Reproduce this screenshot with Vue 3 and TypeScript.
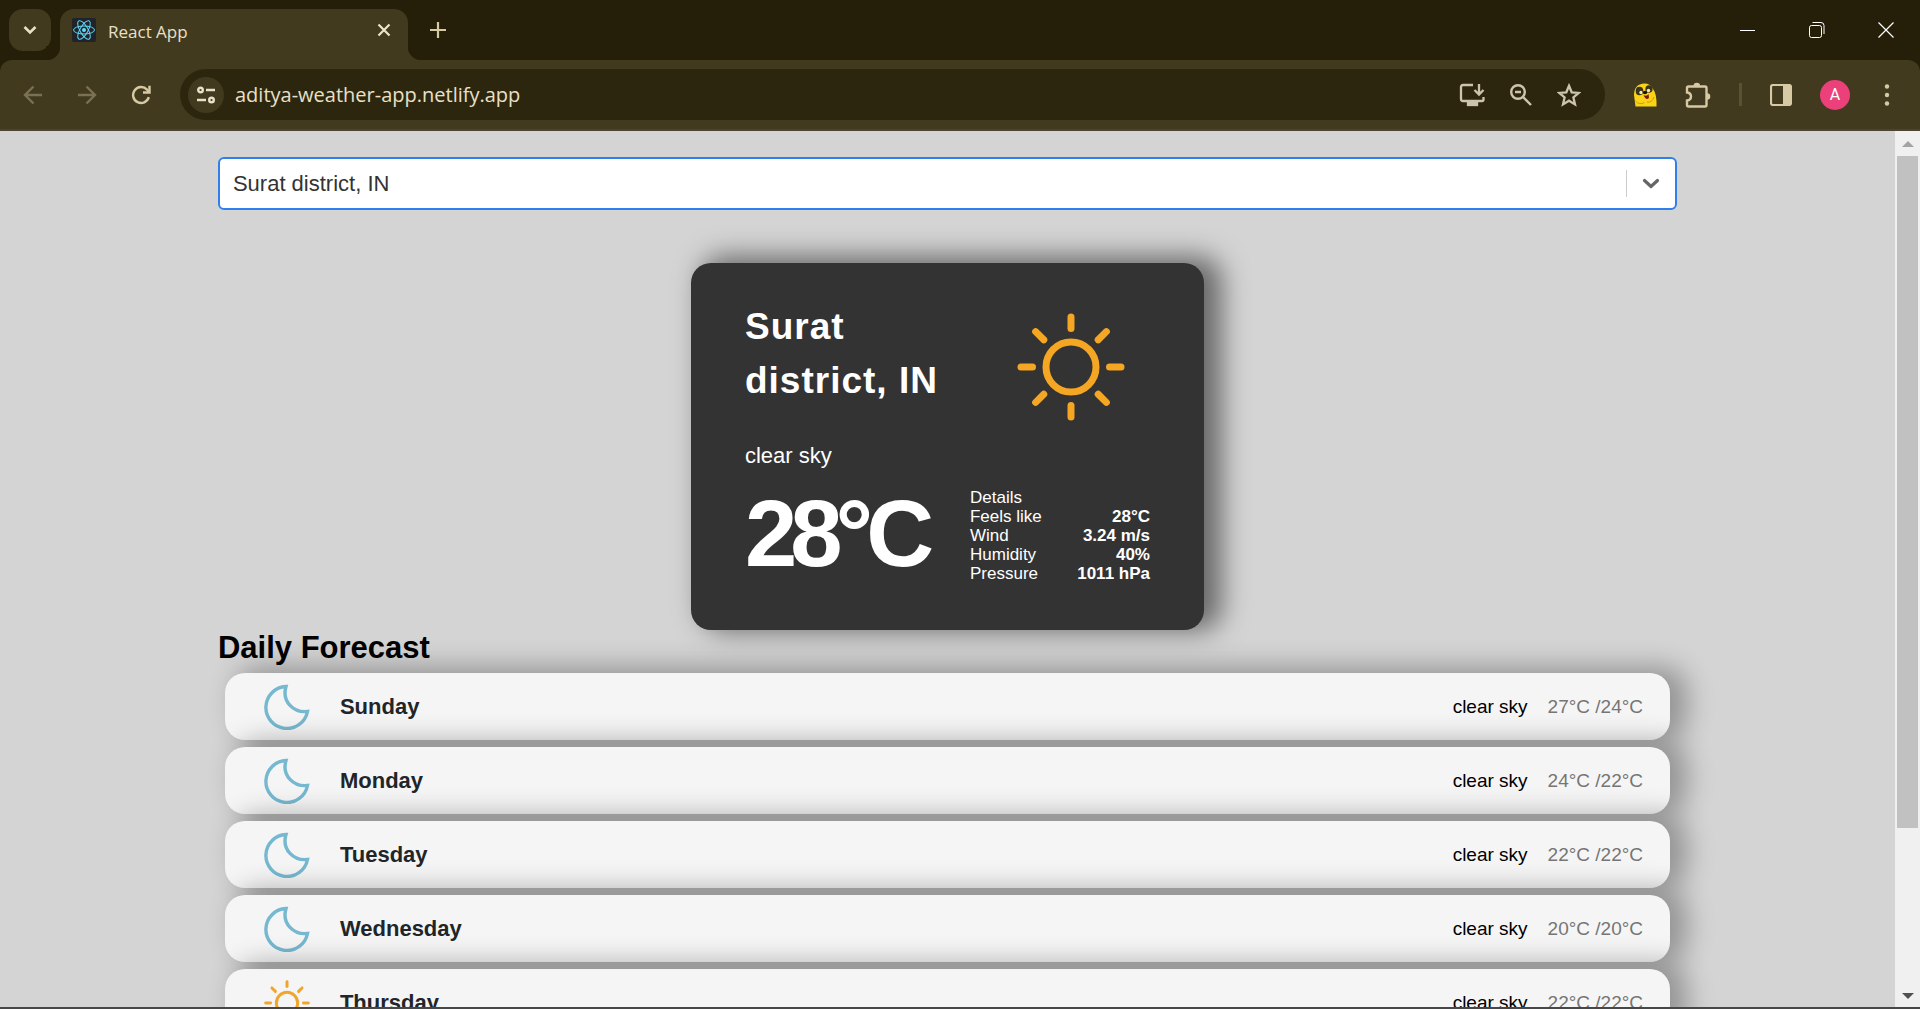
<script setup lang="ts">
import { ref } from 'vue'

interface ForecastDay {
  name: string
  icon: 'moon' | 'sun'
  description: string
  range: string
}

interface Detail {
  label: string
  value: string
}

const url = ref('aditya-weather-app.netlify.app')
const city = ref('Surat district, IN')

const details: Detail[] = [
  { label: 'Feels like', value: '28°C' },
  { label: 'Wind', value: '3.24 m/s' },
  { label: 'Humidity', value: '40%' },
  { label: 'Pressure', value: '1011 hPa' },
]

const days: ForecastDay[] = [
  { name: 'Sunday', icon: 'moon', description: 'clear sky', range: '27°C /24°C' },
  { name: 'Monday', icon: 'moon', description: 'clear sky', range: '24°C /22°C' },
  { name: 'Tuesday', icon: 'moon', description: 'clear sky', range: '22°C /22°C' },
  { name: 'Wednesday', icon: 'moon', description: 'clear sky', range: '20°C /20°C' },
  { name: 'Thursday', icon: 'sun', description: 'clear sky', range: '22°C /22°C' },
]

const rays = [0, 45, 90, 135, 180, 225, 270, 315]
</script>

<template>
  <div class="browser">
    <header class="tabstrip">
      <button class="tab-search" aria-label="Search tabs">
        <svg width="14" height="14" viewBox="0 0 14 14"><path d="M1.5 4l5.5 5.5L12.5 4" fill="none" stroke="#e8e0c8" stroke-width="2.6" /></svg>
      </button>
      <div class="tab">
        <svg class="favicon" width="24" height="24" viewBox="0 0 24 24">
          <rect width="24" height="24" rx="2" fill="#20232a" />
          <g fill="none" stroke="#61dafb" stroke-width="1">
            <ellipse cx="12" cy="12" rx="10.5" ry="4" />
            <ellipse cx="12" cy="12" rx="10.5" ry="4" transform="rotate(60 12 12)" />
            <ellipse cx="12" cy="12" rx="10.5" ry="4" transform="rotate(120 12 12)" />
          </g>
          <circle cx="12" cy="12" r="2" fill="#61dafb" />
        </svg>
        <span class="tab-title">React App</span>
        <button class="icon-btn tab-close" aria-label="Close tab">
          <svg width="14" height="14" viewBox="0 0 14 14"><path d="M1.5 1.5l11 11M12.5 1.5l-11 11" stroke="#ece4cc" stroke-width="2.2" /></svg>
        </button>
      </div>
      <button class="icon-btn new-tab" aria-label="New tab">
        <svg width="16" height="16" viewBox="0 0 16 16"><path d="M8 0v16M0 8h16" stroke="#d6c9a3" stroke-width="2.2" /></svg>
      </button>
      <div class="window-controls">
        <button class="icon-btn" aria-label="Minimize">
          <svg width="16" height="16" viewBox="0 0 16 16"><path d="M0 8.500h15" stroke="#fff" /></svg>
        </button>
        <button class="icon-btn" aria-label="Restore">
          <svg width="16" height="16" viewBox="0 0 16 16" fill="none" stroke="#fff"><rect x=".5" y="3.5" width="12" height="12" rx="2" /><path d="M3.5 .5H12a3 3 0 0 1 3 3V12" /></svg>
        </button>
        <button class="icon-btn" aria-label="Close">
          <svg width="16" height="16" viewBox="0 0 16 16"><path d="M.5 .5l15 15M15.5 .5l-15 15" stroke="#fff" stroke-width="1.2" /></svg>
        </button>
      </div>
    </header>

    <div class="toolbar-back">
      <nav class="toolbar">
        <div class="nav-buttons">
          <button class="icon-btn" aria-label="Back">
            <svg width="20" height="20" viewBox="0 0 20 20" fill="none" stroke="#7b7152" stroke-width="2.4"><path d="M19 10H2.5M10.5 1.5L2 10l8.5 8.5" /></svg>
          </button>
          <button class="icon-btn" aria-label="Forward">
            <svg width="20" height="20" viewBox="0 0 20 20" fill="none" stroke="#7b7152" stroke-width="2.4"><path d="M1 10h16.5M9.5 1.5L18 10l-8.5 8.5" /></svg>
          </button>
          <button class="icon-btn" aria-label="Reload">
            <svg width="20" height="20" viewBox="0 0 20 20" fill="none" stroke="#d6c9a3" stroke-width="2.4"><path d="M17.8 12.2A8 8 0 1 1 16 4.6L18 7" /><path d="M18.5 .8v6.7H12" /></svg>
          </button>
        </div>
        <div class="omnibox">
          <button class="site-info" aria-label="View site information">
            <svg width="20" height="20" viewBox="0 0 20 20" fill="none" stroke="#e8e0c8" stroke-width="2.4"><circle cx="4.5" cy="5" r="2.3" /><path d="M10 5h9M1 15h9" /><circle cx="15.5" cy="15" r="2.3" /></svg>
          </button>
          <input v-model="url" class="url" type="text" aria-label="Address" />
          <div class="omnibox-actions">
            <button class="icon-btn" aria-label="Install app">
              <svg width="26" height="24" viewBox="0 0 26 24" fill="none" stroke="#cdc4b0" stroke-width="2.3"><path d="M14 2H4Q2 2 2 4v12q0 2 2 2h19q1.5 0 1.5-1.5V14" /><path d="M20 1v10M15.5 7l4.5 4.5L24.5 7" /><path d="M9 20h9v2H9z" fill="#cdc4b0" /></svg>
            </button>
            <button class="icon-btn" aria-label="Zoom">
              <svg width="24" height="24" viewBox="0 0 24 24" fill="none" stroke="#cdc4b0" stroke-width="2.4"><circle cx="9" cy="9" r="6.8" /><path d="M14 14l8 8M6 9h6" /></svg>
            </button>
            <button class="icon-btn" aria-label="Bookmark this tab">
              <svg width="24" height="24" viewBox="0 0 24 24" fill="none" stroke="#cdc4b0" stroke-width="2.3"><path d="M12 2.8l2.7 6.5 7 .6-5.3 4.600 1.6 6.900-6-3.700-6 3.700 1.600-6.900L2.300 9.900l7-.6z" /></svg>
            </button>
          </div>
        </div>
        <div class="extensions">
          <button class="icon-btn" aria-label="Extension">
            <svg width="24" height="24" viewBox="0 0 24 24">
              <path d="M2.5 23.5L1 12Q1 1 11.500 .5q6 0 8.500 5.500Q24 11 23.500 23.500z" fill="#fbd315" />
              <ellipse cx="6.5" cy="8" rx="3.8" ry="4.3" fill="#3a3320" /><ellipse cx="16" cy="6" rx="3.6" ry="3.8" fill="#3a3320" />
              <circle cx="8" cy="9.5" r="1.700" fill="#f6e9a0" /><circle cx="15.500" cy="7.500" r="1.700" fill="#f6e9a0" />
              <ellipse cx="12" cy="9.500" rx="2.200" ry="1.700" fill="#17130a" /><path d="M10.500 12q3 2 5-1l.500 4q-3 3-5.500-3z" fill="#7d1620" />
              <path d="M2.500 18q4 4.500 9 1.500M14 19q5 1 7-5" fill="none" stroke="#c79d10" />
            </svg>
          </button>
          <button class="icon-btn" aria-label="Extensions">
            <svg width="26" height="26" viewBox="0 0 26 26"><path d="M4 4.5h16q1.5 0 1.500 1.500v17q0 1.500-1.500 1.500H3.500Q2 24.500 2 23v-4.500q4-.5 4-4t-4-4V6q0-1.500 1.500-1.500z" fill="none" stroke="#d6c9a3" stroke-width="2.400" /><path d="M8.500 4a3.300 3.300 0 0 1 6.600 0zM22 11.200a3.300 3.300 0 0 1 0 6.600z" fill="#d6c9a3" /></svg>
          </button>
          <span class="separator"></span>
          <button class="icon-btn" aria-label="Side panel">
            <svg width="22" height="22" viewBox="0 0 22 22"><rect x="1" y="1" width="20" height="20" rx="2" fill="none" stroke="#d6c9a3" stroke-width="2.2" /><path d="M13 1h7q1 0 1 1v18q0 1-1 1h-7z" fill="#d6c9a3" /></svg>
          </button>
          <button class="avatar" aria-label="Profile">A</button>
          <button class="icon-btn" aria-label="Menu">
            <svg width="6" height="22" viewBox="0 0 6 22" fill="#d6c9a3"><circle cx="3" cy="2.5" r="2.2" /><circle cx="3" cy="11" r="2.2" /><circle cx="3" cy="19.5" r="2.2" /></svg>
          </button>
        </div>
      </nav>
    </div>

    <div class="viewport">
      <main class="page">
        <div class="container">
          <label class="search">
            <input v-model="city" class="search-input" type="text" aria-label="Search for city" />
            <span class="search-divider"></span>
            <svg class="chevron" width="18" height="12" viewBox="0 0 18 12"><path d="M2.5 2.5L9 8.5l6.5-6" fill="none" stroke="#666" stroke-width="3.2" stroke-linecap="round" stroke-linejoin="round" /></svg>
          </label>

          <section class="weather">
            <div class="weather-top">
              <div>
                <h1 class="city">{{ city }}</h1>
                <p class="description">clear sky</p>
              </div>
              <svg class="weather-icon" width="108" height="108" viewBox="-54 -54 108 108" fill="none" stroke="#f5a623" stroke-width="7">
                <circle r="25" />
                <path v-for="r in rays" :key="r" d="M0 -38.5V-50" stroke-linecap="round" :transform="`rotate(${r})`" />
              </svg>
            </div>
            <div class="weather-bottom">
              <p class="temperature">28°C</p>
              <table class="details">
                <tbody>
                  <tr><th colspan="2" scope="colgroup">Details</th></tr>
                  <tr v-for="d in details" :key="d.label">
                    <th scope="row">{{ d.label }}</th>
                    <td>{{ d.value }}</td>
                  </tr>
                </tbody>
              </table>
            </div>
          </section>

          <h2 class="forecast-title">Daily Forecast</h2>
          <ul class="forecast">
            <li v-for="day in days" :key="day.name" class="day">
              <svg v-if="day.icon === 'moon'" class="day-icon" width="46" height="46" viewBox="0 0 46 46">
                <path d="M22 2.5A21 21 0 1 0 43.5 27.5C30 29 17.5 18 22 2.5z" fill="none" stroke="#76b8d0" stroke-width="3.4" />
              </svg>
              <svg v-else class="day-icon" width="46" height="46" viewBox="-54 -54 108 108" fill="none" stroke="#f0a52c" stroke-width="7">
                <circle r="25" />
                <path v-for="r in rays" :key="r" d="M0 -38.5V-50" stroke-linecap="round" :transform="`rotate(${r})`" />
              </svg>
              <span class="day-name">{{ day.name }}</span>
              <span class="day-description">{{ day.description }}</span>
              <span class="day-range">{{ day.range }}</span>
            </li>
          </ul>
        </div>
      </main>
      <div class="scrollbar" aria-hidden="true">
        <svg width="12" height="25" viewBox="0 0 12 25"><path d="M0 16l6-6 6 6z" fill="#a3a3a3" /></svg>
        <div class="track"><div class="thumb"></div></div>
        <svg width="12" height="21" viewBox="0 0 12 21"><path d="M0 7l6 6 6-6z" fill="#505050" /></svg>
      </div>
    </div>
  </div>
</template>

<style>
body {
  margin: 0;
}
</style>

<style scoped>
.browser {
  display: flex;
  flex-direction: column;
  box-sizing: border-box;
  height: 100vh;
  overflow: hidden;
  border-bottom: 2px solid #474747;
  background: #d4d4d4;
  font-family: "Liberation Sans", Arial, sans-serif;
}
button {
  padding: 0;
  border: 0;
  background: none;
  font: inherit;
}
.icon-btn {
  display: flex;
  align-items: center;
  justify-content: center;
}
.tabstrip {
  display: flex;
  flex: none;
  align-items: flex-start;
  height: 60px;
  background: #251f09;
}
.tab-search {
  display: flex;
  align-items: center;
  justify-content: center;
  width: 42px;
  height: 42px;
  margin: 9px 9px 0;
  border-radius: 14px;
  background: #413a1f;
}
.tab {
  position: relative;
  display: flex;
  align-items: center;
  box-sizing: border-box;
  width: 348px;
  height: 51px;
  margin-top: 9px;
  padding: 0 17px 9px 12px;
  border-radius: 14px 14px 0 0;
  background: #413a1f;
}
.tab::before,
.tab::after {
  content: "";
  position: absolute;
  bottom: 0;
  width: 14px;
  height: 14px;
}
.tab::before {
  right: 100%;
  background: radial-gradient(circle at 0 0, #251f09 14px, #413a1f 15px);
}
.tab::after {
  left: 100%;
  background: radial-gradient(circle at 100% 0, #251f09 14px, #413a1f 15px);
}
.tab-title {
  flex: 1;
  padding-top: 3px;
  margin-left: 12px;
  color: #e8e0c8;
  font: 17px/24px "Open Sans", "Noto Sans", sans-serif;
}
.new-tab {
  width: 42px;
  height: 42px;
  margin: 9px 0 0 9px;
}
.window-controls {
  display: flex;
  margin-left: auto;
}
.window-controls .icon-btn {
  width: 69px;
  height: 60px;
}
.toolbar-back {
  flex: none;
  background: #251f09;
}
.toolbar {
  display: flex;
  align-items: center;
  box-sizing: border-box;
  height: 71px;
  padding: 0 30px 0 23px;
  border-bottom: 2px solid #4b4436;
  border-radius: 12px 12px 0 0;
  background: #413a1f;
}
.nav-buttons {
  display: flex;
  gap: 34px;
  width: 157px;
}
.omnibox {
  display: flex;
  flex: 1;
  align-items: center;
  box-sizing: border-box;
  height: 51px;
  padding: 0 24px 0 8px;
  border-radius: 26px;
  background: #2d260e;
}
.site-info {
  display: flex;
  align-items: center;
  justify-content: center;
  width: 36px;
  height: 36px;
  border-radius: 50%;
  background: #413a1f;
}
.url {
  flex: 1;
  min-width: 0;
  margin-left: 11px;
  padding: 0;
  border: 0;
  outline: 0;
  background: none;
  color: #e8e0c8;
  font: 20px/28px "Open Sans", "Noto Sans", sans-serif;
}
.omnibox-actions {
  display: flex;
  gap: 24px;
}
.extensions {
  display: flex;
  align-items: center;
  gap: 28px;
  padding-left: 28px;
}
.separator {
  width: 3px;
  height: 23px;
  background: #5c5230;
}
.avatar {
  width: 30px;
  height: 30px;
  margin-right: 6px;
  border-radius: 50%;
  background: #ec407a;
  color: #fff;
  font: 16px/30px Roboto, sans-serif;
}
.viewport {
  display: flex;
  flex: 1;
  min-height: 0;
}
.page {
  flex: 1;
  overflow: hidden;
}
.container {
  width: 77%;
  margin: 26px auto 0;
}
.search {
  display: flex;
  align-items: center;
  box-sizing: border-box;
  height: 53px;
  padding: 0 15px 0 13px;
  border: 2px solid #2f80ea;
  border-radius: 6px;
  background: #fff;
}
.search-input {
  flex: 1;
  min-width: 0;
  padding: 0;
  border: 0;
  outline: 0;
  background: none;
  color: #333;
  font: 22px/28px "Liberation Sans", Arial, sans-serif;
}
.search-divider {
  width: 1px;
  height: 27px;
  margin-right: 15px;
  background: #ccc;
}
.weather {
  box-sizing: border-box;
  width: 513px;
  height: 367px;
  margin: 53px auto 0;
  padding: 37px 54px 0;
  border-radius: 20px;
  background: #333;
  box-shadow: 14px -3px 27px 4px rgb(0 0 0 / 50%);
  color: #fff;
}
.weather-top {
  display: flex;
  justify-content: space-between;
}
.city {
  width: 240px;
  margin: 0;
  font-size: 37px;
  line-height: 54px;
  letter-spacing: 1px;
}
.description {
  margin: 35px 0 0;
  font-size: 22px;
  line-height: 26px;
}
.weather-icon {
  margin: 13px 25px 0 0;
}
.weather-bottom {
  display: flex;
  justify-content: space-between;
  margin-top: 9px;
}
.temperature {
  margin: 0;
  font-size: 94px;
  font-weight: 700;
  line-height: 112px;
  letter-spacing: -7px;
}
.details {
  align-self: flex-start;
  width: 180px;
  margin-top: 10px;
  border-collapse: collapse;
  font-size: 17px;
  line-height: 19px;
}
.details th {
  padding: 0;
  font-weight: 400;
  text-align: left;
  vertical-align: top;
}
.details td {
  padding: 0;
  font-weight: 700;
  text-align: right;
  vertical-align: top;
}
.forecast-title {
  margin: 0;
  font-size: 31px;
  line-height: 36px;
}
.forecast {
  display: flex;
  flex-direction: column;
  gap: 7px;
  margin: 7px;
  padding: 0;
  list-style: none;
}
.day {
  display: flex;
  align-items: center;
  box-sizing: border-box;
  height: 67px;
  padding: 0 27px 0 39px;
  border-radius: 20px;
  background: #f5f5f5;
  box-shadow: 14px -3px 27px 3px rgb(0 0 0 / 30%);
  font-size: 19px;
}
.day-name {
  flex: 1;
  margin-left: 30px;
  color: #212529;
  font-size: 22px;
  font-weight: 700;
}
.day-range {
  margin-left: 20px;
  color: #757575;
}
.scrollbar {
  display: flex;
  flex-direction: column;
  align-items: center;
  width: 25px;
  background: #f0f0f0;
}
.track {
  flex: 1;
  width: 21px;
}
.thumb {
  height: 81%;
  background: #c1c1c1;
}
</style>
